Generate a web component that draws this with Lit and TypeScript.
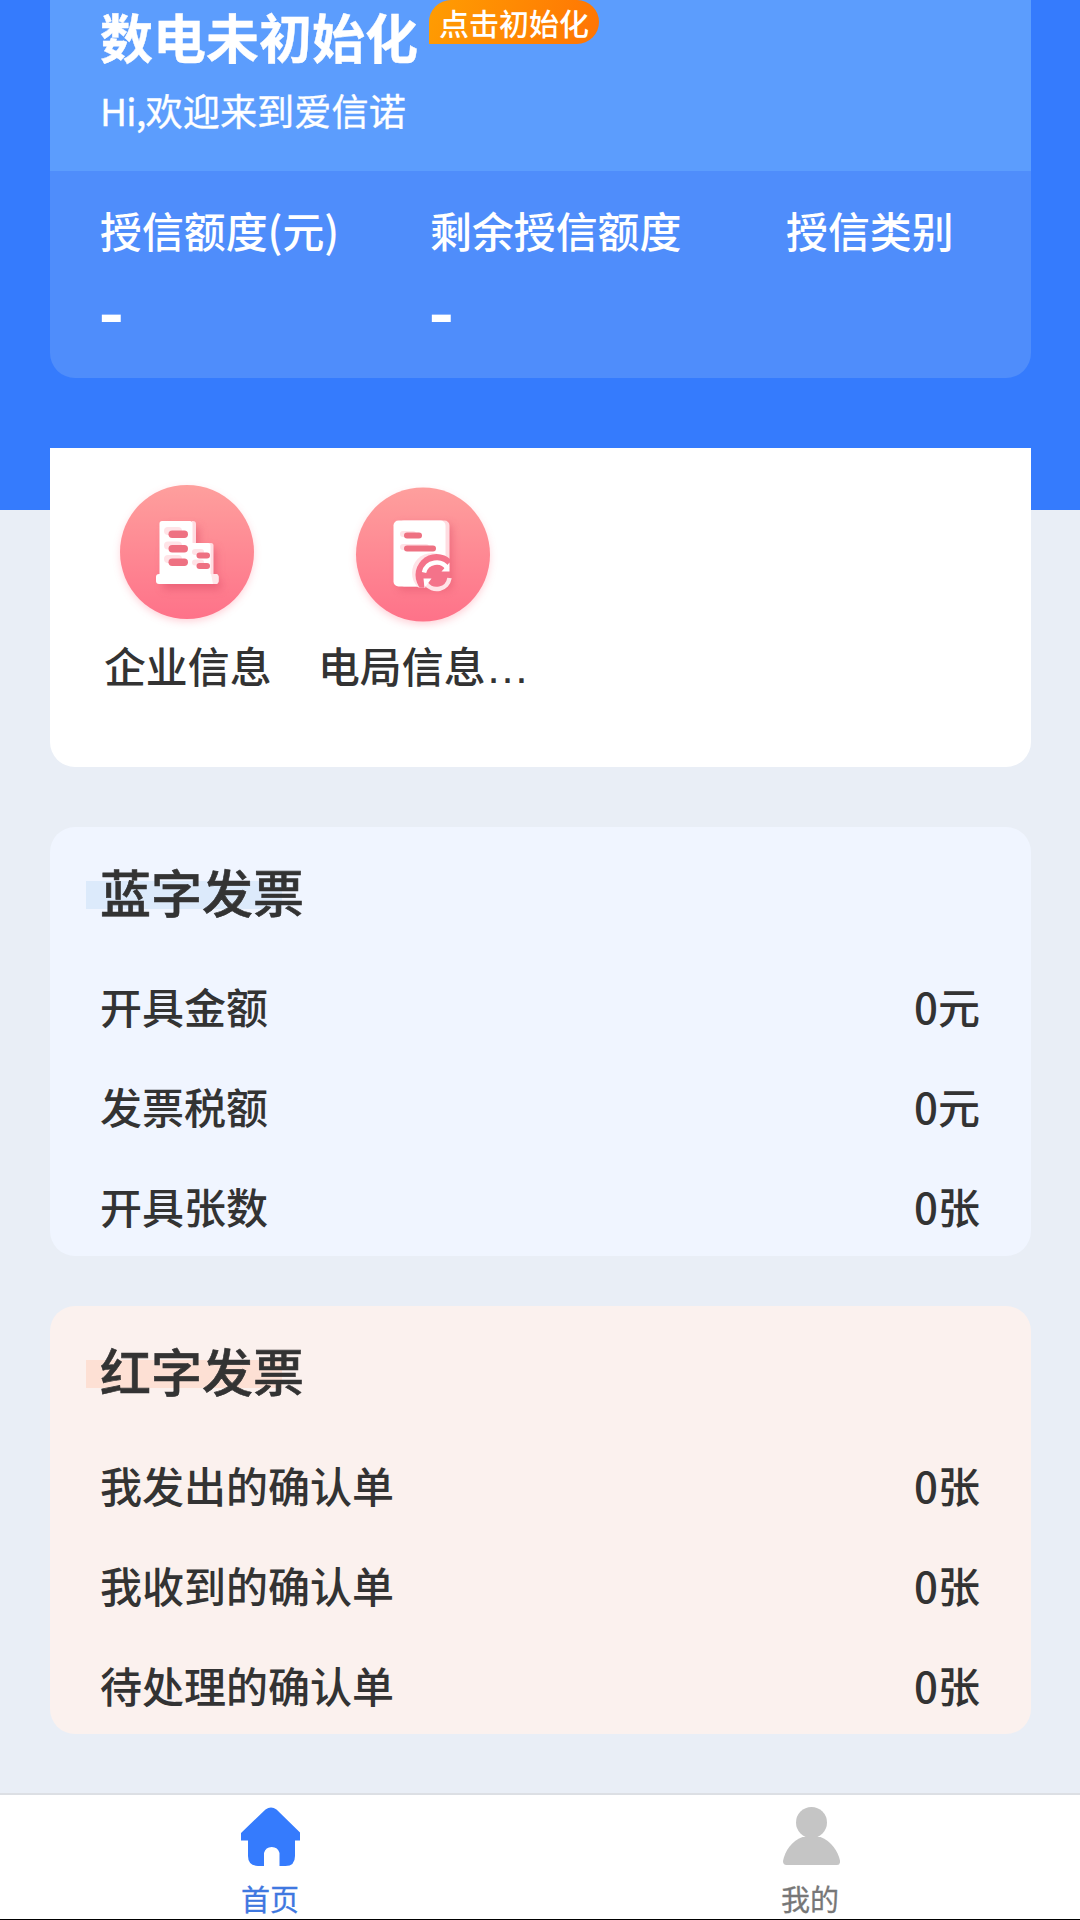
import { LitElement, html, css, svg } from "lit";
import { customElement, property } from "lit/decorators.js";

const companyIcon = svg`
  <svg width="180" height="160" viewBox="0 0 180 160">
    <defs>
      <linearGradient id="bg" x1="0" y1="0" x2="0" y2="1">
        <stop offset="0" stop-color="#fe9f9d"/><stop offset="1" stop-color="#fe7289"/>
      </linearGradient>
      <filter id="glow" x="-30%" y="-30%" width="160%" height="160%"><feGaussianBlur stdDeviation="4"/></filter>
      <filter id="soft" x="-30%" y="-30%" width="170%" height="170%"><feGaussianBlur stdDeviation="4"/></filter>
    </defs>
    <circle cx="90" cy="85" r="66" fill="#ff8093" opacity=".4" filter="url(#glow)"/>
    <circle cx="90" cy="82" r="67" fill="url(#bg)"/>
    <path d="M68 57h34v21h17v32h5v9H66z" fill="#d94763" opacity=".5" filter="url(#soft)"/>
    <path d="M95 51h1q3 0 3 3v48h-6z" fill="#ffdce1"/>
    <path d="M110 73h4q2.500 0 2.500 2.500V106h-7z" fill="#ffdce1"/>
    <path d="M65 51h28q2.500 0 2.500 2.500V73h15.500q2.500 0 2.500 2.500V106H62.500V53.500q0-2.500 2.500-2.500z" fill="#fff"/>
    <rect x="59" y="104" width="62.500" height="10" rx="3" fill="#fff"/>
    <path d="M114 104h4.500q3 0 3 3v4q0 3-3 3H116z" fill="#ffe8eb"/>
    <g fill="#ffe3e7">
      <rect x="67" y="57" width="18" height="8" rx="4"/><rect x="67" y="71.500" width="18" height="8" rx="4"/>
      <rect x="67" y="85" width="18" height="8" rx="4"/><rect x="95" y="79" width="12" height="6" rx="3"/>
      <rect x="95" y="89.500" width="12" height="6" rx="3"/>
    </g>
    <g fill="#ee7182">
      <rect x="71.500" y="60.500" width="19.500" height="7.500" rx="3.700"/><rect x="71.500" y="75" width="19.500" height="7.500" rx="3.700"/>
      <rect x="71.500" y="88.500" width="19.500" height="7.500" rx="3.700"/><rect x="99.500" y="82.500" width="13.500" height="6" rx="3"/>
      <rect x="99.500" y="93" width="13.500" height="6" rx="3"/>
    </g>
  </svg>`;

const bureauIcon = svg`
  <svg width="180" height="160" viewBox="0 0 180 160">
    <defs>
      <linearGradient id="bg" x1="0" y1="0" x2="0" y2="1">
        <stop offset="0" stop-color="#fe9f9d"/><stop offset="1" stop-color="#fe7289"/>
      </linearGradient>
      <filter id="glow" x="-30%" y="-30%" width="160%" height="160%"><feGaussianBlur stdDeviation="4"/></filter>
      <filter id="soft" x="-30%" y="-30%" width="170%" height="170%"><feGaussianBlur stdDeviation="4"/></filter>
      <clipPath id="sheet"><rect x="60" y="50" width="57" height="67.500" rx="5"/></clipPath>
    </defs>
    <circle cx="90" cy="88" r="66" fill="#ff8093" opacity=".4" filter="url(#glow)"/>
    <circle cx="90" cy="84.500" r="67" fill="url(#bg)"/>
    <rect x="65" y="54" width="54" height="66" rx="5" fill="#d94763" opacity=".45" filter="url(#soft)"/>
    <rect x="66" y="50.500" width="50.500" height="66" rx="5" fill="#ffdce1"/>
    <rect x="60.500" y="50.500" width="52" height="66" rx="5" fill="#fff"/>
    <g clip-path="url(#sheet)">
      <circle cx="99" cy="103" r="20" fill="#ffe3e7"/>
      <circle cx="103.500" cy="105" r="21" fill="#f4738a"/>
    </g>
    <g fill="#ffe3e7"><rect x="67" y="61" width="16" height="6" rx="3"/><rect x="67" y="74" width="29" height="6" rx="3"/></g>
    <g fill="#ee7182"><rect x="71" y="62.500" width="18" height="6" rx="3"/><rect x="71" y="75.500" width="32" height="6" rx="3"/></g>
    <g fill="none" stroke-width="4.500">
      <path d="M91 102.500A13 13 0 0 1 114.500 98.500" stroke="#fff"/>
      <path d="M116.500 108A13 13 0 0 1 93 113.500" stroke="#ffe3e7"/>
    </g>
    <path d="M116.500 92.500V101.500H108.500zM90.500 108.500H98.500L91.500 118z" fill="#fff"/>
  </svg>`;

const homeIcon = svg`
  <svg width="60" height="60" viewBox="0 0 60 60">
    <path fill="#357bfd" d="M25.500 2.500Q31-1.500 36.500 2.500L60 25.500V33.500H55V49Q55 59 45.500 59H39.500V46A8 8 0 0 0 24 46V59H18Q8 58.500 8 49V33.500H1V26Z"/>
  </svg>`;

const userIcon = svg`
  <svg width="60" height="60" viewBox="0 0 60 60">
    <g fill="#c5c5c5"><circle cx="31.500" cy="15.500" r="15.500"/>
    <path d="M22.500 30H40.500C51 34 58 44 60 53.500Q60.500 58 57 58H6.500Q3 58 3 54C5 44 11.500 34 22.500 30z"/></g>
  </svg>`;

type Row = [string, string];

@customElement("invoice-card")
export class InvoiceCard extends LitElement {
  @property() heading = "";
  @property({ attribute: false }) rows: Row[] = [];
  @property({ reflect: true }) tone = "blue";

  static styles = css`
    :host { display: block; box-sizing: border-box; height: 428.5px; padding: 29px 51px 0 50px; border-radius: 25px; overflow: hidden; background: #f0f5ff; --mark: #dceafb; }
    :host([tone="red"]) { background: #fbf1ee; --mark: #fde0d4; }
    .heading { width: 196px; height: 72px; margin: 0 0 28px -14px; padding-left: 14px; box-sizing: border-box; font-size: 51px; line-height: 71px; font-weight: 500; white-space: nowrap; -webkit-text-stroke: .6px currentColor;
      background: linear-gradient(var(--mark), var(--mark)) 0 25px / 100% 28px no-repeat; }
    .row { display: flex; justify-content: space-between; height: 100px; line-height: 100px; font-size: 42px; }
  `;

  render() {
    return html`<div class="heading">${this.heading}</div>
      ${this.rows.map(([k, v]) => html`<div class="row"><span>${k}</span><span>${v}</span></div>`)}`;
  }
}

@customElement("app-root")
export class AppRoot extends LitElement {
  static styles = css`
    :host { display: block; width: 1080px; height: 1920px; overflow: hidden; color: #333; font-family: "Noto Sans CJK SC", sans-serif; font-weight: 500; }
    .page { box-sizing: border-box; height: 1920px; display: flex; flex-direction: column; border-bottom: 1px solid #000; background: linear-gradient(#357bfd 510px, #e9eef6 510px); }
    .content { flex: 1; padding: 0 49px 0 50px; }
    .welcome { box-sizing: border-box; height: 171px; padding-left: 50px; background: #5c9dfd; color: #fff; }
    .title-row { display: flex; align-items: flex-start; height: 75px; }
    .title { font-size: 53px; line-height: 73px; font-weight: 700; width: 329px; white-space: nowrap; -webkit-text-stroke: .4px currentColor; }
    .badge { box-sizing: border-box; width: 170px; height: 44px; padding-left: 10px; line-height: 45px; font-size: 30px; border-radius: 22px 22px 22px 0; background: linear-gradient(110deg, #ff9d02, #ff7404); white-space: nowrap; }
    .greeting { line-height: 70px; font-size: 37.200px; font-weight: 400; -webkit-text-stroke: .35px currentColor; }
    .latin { letter-spacing: -.7px; }
    .stats { display: grid; grid-template-columns: 330px 356px 1fr; box-sizing: border-box; height: 207px; padding: 27px 0 0 50px; border-radius: 0 0 25px 25px; background: #4f8dfb; color: #fff; }
    .stat-label { font-size: 41.900px; line-height: 64px; white-space: nowrap; }
    .stat-value { font-size: 69px; line-height: 80px; font-weight: 700; margin: 6px 0 0 -1.5px; }
    .shortcuts { display: flex; box-sizing: border-box; height: 319px; margin: 70px 0 60px; padding: 22px 0 0 19px; border-radius: 0 0 25px 25px; background: #fff; }
    .shortcut { display: flex; flex-direction: column; align-items: center; width: 236px; }
    .shortcut svg { display: block; }
    .shortcut-label { margin-top: 3px; padding-left: 1.5px; line-height: 64px; font-size: 41.900px; white-space: nowrap; }
    .dots { font-family: "Liberation Sans", sans-serif; font-weight: 400; font-size: 44px; line-height: 1px; }
    .cards { display: flex; flex-direction: column; gap: 50px; }
    .tabs { display: flex; height: 124px; border-top: 2px solid #dcdfe4; background: #fff; }
    .tab { flex: 1; display: flex; flex-direction: column; align-items: center; padding-top: 12px; font-size: 29px; line-height: 40px; font-weight: 400; color: #777; }
    .tab.active { color: #3f78e0; }
    .tab svg { display: block; margin-bottom: 11px; }
    .tab span { -webkit-text-stroke: .3px currentColor; }
  `;

  render() {
    return html`<div class="page">
      <main class="content">
        <section class="welcome">
          <div class="title-row"><div class="title">数电未初始化</div><div class="badge">点击初始化</div></div>
          <div class="greeting"><span class="latin">Hi,</span>欢迎来到爱信诺</div>
        </section>
        <section class="stats">
          <div><div class="stat-label">授信额度(元)</div><div class="stat-value">-</div></div>
          <div><div class="stat-label">剩余授信额度</div><div class="stat-value">-</div></div>
          <div><div class="stat-label">授信类别</div></div>
        </section>
        <section class="shortcuts">
          <div class="shortcut">${companyIcon}<div class="shortcut-label">企业信息</div></div>
          <div class="shortcut">${bureauIcon}<div class="shortcut-label">电局信息<span class="dots">…</span></div></div>
        </section>
        <section class="cards">
          <invoice-card heading="蓝字发票" .rows=${[["开具金额", "0元"], ["发票税额", "0元"], ["开具张数", "0张"]] as Row[]}></invoice-card>
          <invoice-card tone="red" heading="红字发票" .rows=${[["我发出的确认单", "0张"], ["我收到的确认单", "0张"], ["待处理的确认单", "0张"]] as Row[]}></invoice-card>
        </section>
      </main>
      <nav class="tabs">
        <div class="tab active">${homeIcon}<span>首页</span></div>
        <div class="tab">${userIcon}<span>我的</span></div>
      </nav>
    </div>`;
  }
}
